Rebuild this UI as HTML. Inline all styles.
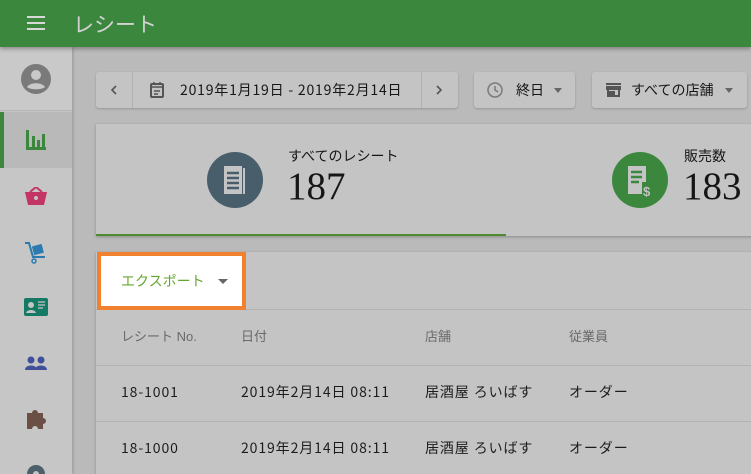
<!DOCTYPE html>
<html><head><meta charset="utf-8"><style>
*{margin:0;padding:0;box-sizing:border-box}
html,body{width:751px;height:474px;overflow:hidden}
body{background:#bababa;font-family:"Liberation Sans","Noto Sans CJK JP",sans-serif;position:relative;color:#161616}
.a{position:absolute}
.j{font-family:"Noto Sans CJK JP",sans-serif}
.hdr{left:0;top:0;width:751px;height:47px;background:#3a873d;box-shadow:0 2px 4px rgba(0,0,0,.3);z-index:3}
.side{left:0;top:47px;width:72px;height:427px;background:#c6c6c6;box-shadow:1px 0 3px rgba(0,0,0,.2)}
.btn{background:#c4c4c4;border-radius:3px;box-shadow:0 1px 2px rgba(0,0,0,.2);height:36px;top:72px;font-size:14px;line-height:36px}
.card{background:#c4c4c4;box-shadow:0 1px 3px rgba(0,0,0,.25)}
.th{font-size:13px;color:#6a6a6a;top:326px}
.td{font-size:14px;color:#1c1c1c;font-family:"Noto Sans CJK JP",sans-serif;line-height:20px;letter-spacing:0.9px}
</style></head><body>
<div class="a hdr">
 <div class="a" style="left:27px;top:16px;width:18px;height:2px;background:#d8d8d8;box-shadow:0 6px 0 #d8d8d8,0 12px 0 #d8d8d8"></div>
 <div class="a" style="left:73px;top:9px;font-size:21px;color:#d3d3d3">レシート</div>
</div>
<div class="a side">
 <div class="a" style="left:0;top:0;width:72px;height:64px;background:#c9c9c9;border-bottom:1px solid #b4b4b4"></div>
 <svg class="a" style="left:21px;top:17px" width="30" height="30" viewBox="0 0 30 30"><circle cx="15" cy="15" r="15" fill="#7a7a7a"/><circle cx="15" cy="11" r="5" fill="#c9c9c9"/><path d="M6 23c3-5 15-5 18 0c-3 3-15 3-18 0z" fill="#c9c9c9"/></svg>
 <div class="a" style="left:0;top:65px;width:72px;height:56px;background:#b9b9b9"></div>
 <div class="a" style="left:0;top:65px;width:4px;height:56px;background:#3a873d"></div>
 <svg class="a" style="left:26px;top:83px" width="20" height="20"><path d="M0 0h3v20h-3zM0 17h20v3h-20zM6 6h3v14h-3zM11 10h3v10h-3zM16 4h3v16h-3z" fill="#3a873d"/></svg>
 <svg class="a" style="left:25px;top:140px" width="22" height="18"><path d="M0 5h22l-3 13h-16z" fill="#c23564"/><path d="M5 5l6-5 6 5" stroke="#c23564" stroke-width="2" fill="none"/><circle cx="11" cy="11" r="2" fill="#c4c4c4"/></svg>
 <svg class="a" style="left:25px;top:195px" width="22" height="22"><path d="M0 1h4l4 14h12" stroke="#2b7bb0" stroke-width="2" fill="none"/><rect x="8" y="3" width="10" height="9" fill="#2b7bb0" transform="rotate(-15 13 8)"/><circle cx="9" cy="19" r="2" fill="none" stroke="#2b7bb0" stroke-width="1.5"/></svg>
 <svg class="a" style="left:24px;top:251px" width="24" height="18"><rect width="24" height="18" rx="2" fill="#137a66"/><circle cx="7" cy="7" r="3" fill="#c4c4c4"/><path d="M2 15c1-4 9-4 10 0z" fill="#c4c4c4"/><path d="M14 4h7M14 7h7M14 10h5" stroke="#c4c4c4" stroke-width="1.3"/></svg>
 <svg class="a" style="left:25px;top:309px" width="22" height="14"><circle cx="6" cy="4" r="3.5" fill="#3f4f9a"/><circle cx="16" cy="4" r="3.5" fill="#3f4f9a"/><path d="M0 14c0-6 12-6 12 0zM10 14c0-6 12-6 12 0z" fill="#3f4f9a"/></svg>
 <svg class="a" style="left:25px;top:360px" width="22" height="22"><path d="M2 6h5a3 3 0 1 1 6 0h5v5a3 3 0 1 1 0 6v5h-5a3 3 0 1 0-6 0h-5z" fill="#6b4f45"/></svg>
 <svg class="a" style="left:25px;top:416px" width="22" height="22"><circle cx="11" cy="11" r="9" fill="#4d5f6a"/><circle cx="11" cy="11" r="3" fill="#c4c4c4"/></svg>
</div>

<div class="a btn" style="left:96px;width:362px">
 <div class="a" style="left:36px;top:0;width:1px;height:36px;background:#b0b0b0"></div>
 <div class="a" style="left:325px;top:0;width:1px;height:36px;background:#b0b0b0"></div>
 <svg class="a" style="left:14px;top:13px" width="8" height="10"><path d="M6 1L2 5l4 4" stroke="#555" stroke-width="1.6" fill="none"/></svg>
 <svg class="a" style="left:339px;top:13px" width="8" height="10"><path d="M2 1l4 4-4 4" stroke="#555" stroke-width="1.6" fill="none"/></svg>
 <svg class="a" style="left:54px;top:10px" width="14" height="16"><rect x="1" y="2" width="12" height="13" rx="1" fill="none" stroke="#555" stroke-width="2"/><path d="M1 5h12M4 0v3M10 0v3M4 9h6M4 12h4" stroke="#555" stroke-width="1.5"/></svg>
 <div class="a j" style="left:84px;top:0;letter-spacing:0.8px">2019年1月19日 - 2019年2月14日</div>
</div>
<div class="a btn" style="left:474px;width:101px">
 <svg class="a" style="left:13px;top:10px" width="16" height="16"><circle cx="8" cy="8" r="7" fill="none" stroke="#7a7a7a" stroke-width="1.5"/><path d="M8 4v4l3 2" stroke="#7a7a7a" stroke-width="1.5" fill="none"/></svg>
 <div class="a" style="left:42px;top:0">終日</div>
 <div class="a" style="left:80px;top:16px;border:4px solid transparent;border-top:5px solid #666"></div>
</div>
<div class="a btn" style="left:592px;width:155px">
 <svg class="a" style="left:14px;top:11px" width="15" height="14"><path d="M0 0h15v2h-15zM0 3h15v4h-15zM1 7h2v7h-2zM12 7h2v7h-2zM1 12h13v2h-13zM3 8h6v4h-6z" fill="#555"/></svg>
 <div class="a" style="left:39px;top:0">すべての店舗</div>
 <div class="a" style="left:133px;top:16px;border:4px solid transparent;border-top:5px solid #666"></div>
</div>

<div class="a card" style="left:96px;top:124px;width:660px;height:112px">
 <div class="a" style="left:0;top:110px;width:410px;height:2px;background:#4d8a32"></div>
 <svg class="a" style="left:111px;top:28px" width="56" height="56"><circle cx="28" cy="28" r="28" fill="#485e6b"/><path d="M17 14h18v28h-18z" fill="#c4c4c4"/><path d="M37 16v26" stroke="#c4c4c4" stroke-width="2"/><path d="M20 21h12M20 26h12M20 31h12M20 36h12" stroke="#485e6b" stroke-width="2.5"/></svg>
 <div class="a" style="left:192px;top:22px;font-size:14px">すべてのレシート</div>
 <div class="a" style="left:191px;top:40px;font-size:39px;font-family:'Liberation Serif',serif">187</div>
 <svg class="a" style="left:516px;top:28px" width="56" height="56"><circle cx="28" cy="28" r="28" fill="#3a873d"/><path d="M16 14h18v16h-4v12h-14z" fill="#c4c4c4"/><path d="M19 20h11M19 25h11M19 30h8" stroke="#3a873d" stroke-width="2.5"/><text x="31" y="44" font-size="13" font-weight="bold" fill="#c4c4c4" font-family="Liberation Sans">$</text></svg>
 <div class="a" style="left:588px;top:22px;font-size:14px">販売数</div>
 <div class="a" style="left:587px;top:40px;font-size:39px;font-family:'Liberation Serif',serif">183</div>
</div>

<div class="a card" style="left:96px;top:252px;width:660px;height:230px">
 <div class="a" style="left:0;top:57px;width:660px;height:1px;background:#b2b2b2"></div>
 <div class="a" style="left:0;top:113px;width:660px;height:1px;background:#b2b2b2"></div>
 <div class="a" style="left:0;top:169px;width:660px;height:1px;background:#b2b2b2"></div>
</div>
<div class="a" style="left:97px;top:252px;width:149px;height:58px;background:#fff;border:4px solid #f0812f"></div>
<div class="a" style="left:121px;top:271px;font-size:14px;color:#66a531">エクスポート</div>
<div class="a" style="left:218px;top:279px;border:5px solid transparent;border-top:5px solid #666"></div>
<div class="a th" style="left:121px">レシート No.</div>
<div class="a th" style="left:241px">日付</div>
<div class="a th" style="left:425px">店舗</div>
<div class="a th" style="left:569px">従業員</div>
<div class="a td" style="left:121px;top:382px">18-1001</div>
<div class="a td" style="left:241px;top:382px">2019年2月14日 08:11</div>
<div class="a td" style="left:425px;top:382px">居酒屋 ろいばす</div>
<div class="a td" style="left:569px;top:382px">オーダー</div>
<div class="a td" style="left:121px;top:438px">18-1000</div>
<div class="a td" style="left:241px;top:438px">2019年2月14日 08:11</div>
<div class="a td" style="left:425px;top:438px">居酒屋 ろいばす</div>
<div class="a td" style="left:569px;top:438px">オーダー</div>
</body></html>
